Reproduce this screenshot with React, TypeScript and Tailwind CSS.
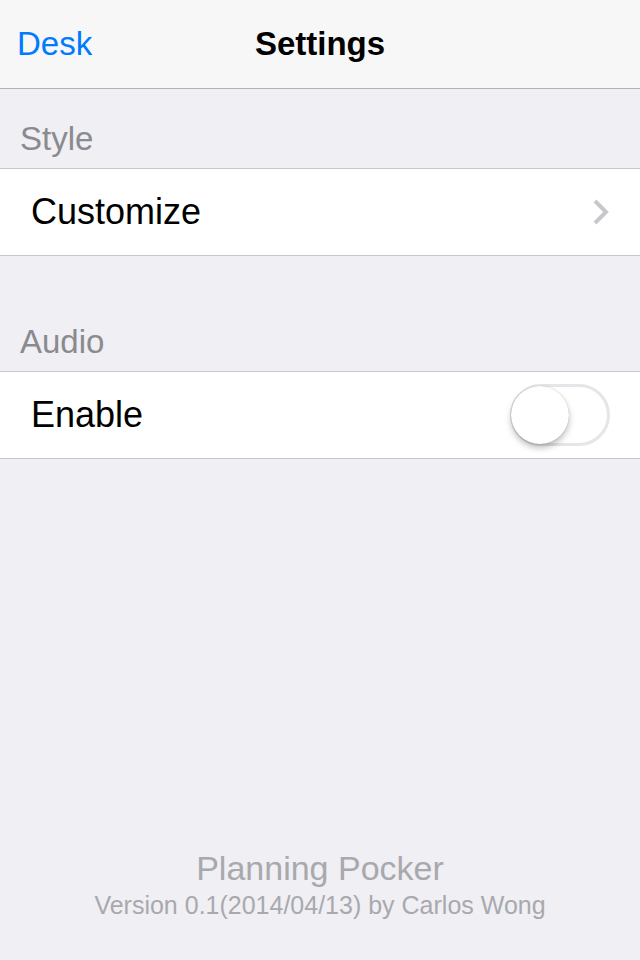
const font = { fontFamily: '"Liberation Sans", Arial, sans-serif' };

const SectionHeader = ({ title, tall }: { title: string; tall?: boolean }) => (
    <div className={`flex items-end px-5 pb-[5px] text-[33px] text-[#8a8a8f] ${tall ? 'h-[115px]' : 'h-[79px]'}`}>
        {title}
    </div>
);

const Toggle = () => (
    <div className="relative w-[100px] h-[62px] rounded-full border-[3px] border-[#e5e5ea] bg-white">
        <div className="absolute left-[-2px] top-[-1px] w-[58px] h-[58px] rounded-full bg-white shadow-[0_4px_6px_rgba(0,0,0,0.25),0_0_1px_rgba(0,0,0,0.3)]" />
    </div>
);

const App = () => {
    return (
        <div style={font} className="w-[640px] h-[960px] flex flex-col bg-[#efeff4]">
            <header className="h-[89px] flex items-center justify-center relative bg-[#f7f7f7] border-b border-[#b2b2b2]">
                <span className="absolute left-[17px] text-[33px] text-[#007aff]">Desk</span>
                <span className="text-[33px] font-bold text-black">Settings</span>
            </header>

            <SectionHeader title="Style" />
            <div className="h-[88px] flex items-center justify-between pl-[31px] pr-[31px] bg-white border-y border-[#c8c7cc]">
                <span className="text-[36px] text-black">Customize</span>
                <svg width="16" height="26" viewBox="0 0 16 26">
                    <path d="M2 2 L13 13 L2 24" fill="none" stroke="#c7c7cc" strokeWidth="4" />
                </svg>
            </div>

            <SectionHeader title="Audio" tall />
            <div className="h-[88px] flex items-center justify-between pl-[31px] pr-[30px] bg-white border-y border-[#c8c7cc]">
                <span className="text-[36px] text-black">Enable</span>
                <Toggle />
            </div>

            <div className="flex-1" />
            <footer className="flex flex-col items-center pb-[38px] text-[#a9a9ad]">
                <span className="text-[34px] leading-[40px]">Planning Pocker</span>
                <span className="text-[25px] leading-[34px]">Version 0.1(2014/04/13) by Carlos Wong</span>
            </footer>
        </div>
    );
};

export default App;
